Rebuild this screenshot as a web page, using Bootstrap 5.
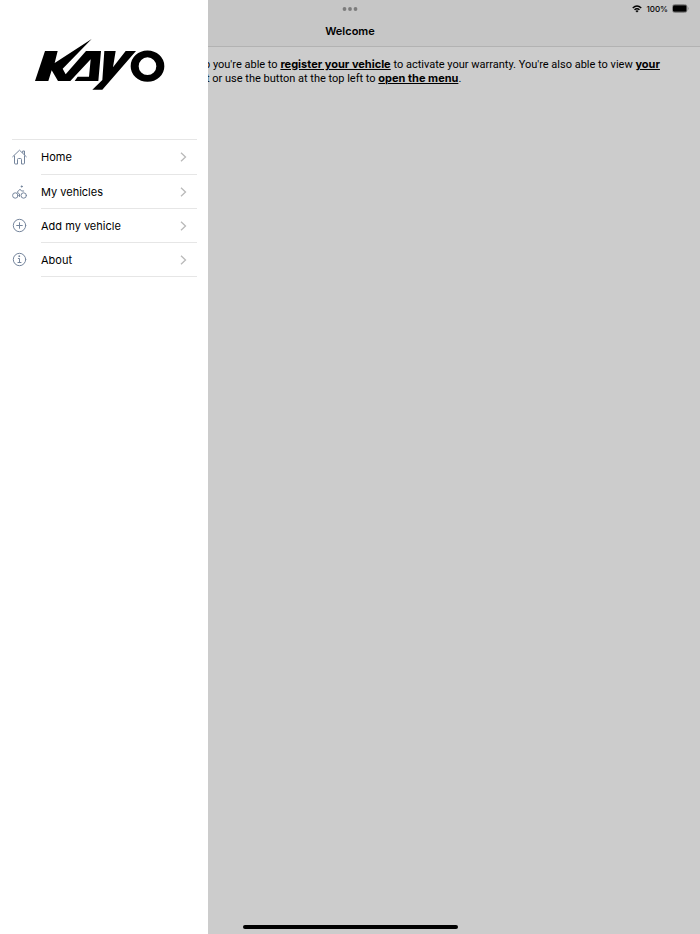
<!DOCTYPE html>
<html lang="en">
<head>
<meta charset="utf-8">
<meta name="viewport" content="width=device-width, initial-scale=1">
<title>Welcome</title>
<link href="https://cdn.jsdelivr.net/npm/bootstrap@5.3.0/dist/css/bootstrap.min.css" rel="stylesheet">
<style>
body { font-family: Inter, "Liberation Sans", sans-serif; font-size: 11px; line-height: 14px; color: #000; background: #cccccc; }
svg { display: block; }
.topbar { background: #c6c6c6; border-bottom: 1px solid #b2b2b2; }
.status { height: 17px; font-size: 8px; font-weight: 500; padding-right: 11px; }
.dots { color: #7c7c7c; top: 7px; }
.page-title { height: 29px; font-size: 11px; line-height: 29px; font-weight: 600; }
/* the paragraph begins beneath the open drawer */
.intro { padding: 11px 12px 0 206px; text-indent: -2px; font-family: Roboto, sans-serif; }
.intro a { color: #000; font-family: Inter, sans-serif; font-weight: 700; line-height: 1; }
.drawer { width: 208px; z-index: 10; }
.brand { padding: 38px 0 48px 34px; }
.menu { margin: 0 11px 0 12px; border-top: 1px solid #e6e6e6; }
.menu a { color: #000; }
.menu a:first-child .menu-row { height: 35px; }
.menu-icon { width: 29px; padding-bottom: 1px; color: #75859c; }
.menu-row { height: 34px; border-bottom: 1px solid #e6e6e6; padding-right: 10px; }
.chevron { color: #b9b9b9; }
.home-bar { width: 215px; height: 4px; background: #000; margin-bottom: 5px; }
</style>
<script src="https://cdn.jsdelivr.net/npm/bootstrap@5.3.0/dist/js/bootstrap.bundle.min.js"></script>
</head>
<body>
<div class="d-flex flex-column min-vh-100 position-relative">
  <header class="topbar position-relative">
    <div class="status d-flex align-items-center justify-content-end">
      <svg class="me-1" width="10" height="8" viewBox="0 0 20 16" fill="none" stroke="#000" stroke-width="2.8" aria-hidden="true"><path d="M1.500 6Q10-2 18.500 6M5 9.600Q10 5 15 9.600"/><path d="M10 15 6.900 12Q10 9.300 13.100 12Z" fill="#000" stroke="none"/></svg>
      <span>100%</span>
      <svg class="ms-1" width="17" height="9" viewBox="0 0 17 9" aria-hidden="true"><rect x=".5" y=".5" width="14.500" height="8" rx="2.300" fill="none" stroke="#858585"/><rect x="1" y="1.200" width="13.500" height="6.600" rx="1.300"/><path d="M16 3Q17.300 4.500 16 6Z" fill="#858585"/></svg>
    </div>
    <svg class="dots position-absolute start-50 translate-middle-x" width="16" height="4" viewBox="0 0 16 4" fill="currentColor" aria-hidden="true"><circle cx="2.500" cy="2" r="1.900"/><circle cx="8" cy="2" r="1.900"/><circle cx="13.500" cy="2" r="1.900"/></svg>
    <h1 class="page-title text-center m-0">Welcome</h1>
  </header>

  <main class="flex-grow-1">
    <p class="intro m-0">p you're able to <a href="#register">register your vehicle</a> to activate your warranty. You're also able to view <a href="#vehicles">your</a><br>t or use the button at the top left to <a href="#menu">open the menu</a>.</p>
  </main>

  <div class="home-bar rounded-pill mx-auto"></div>

  <aside class="drawer position-absolute top-0 bottom-0 start-0 bg-white" id="menu">
    <div class="brand">
      <svg width="132" height="53" viewBox="27 24 396 159" role="img" aria-label="Kayo"><path d="M60 63H98L89 99 200 27 113 116 122 133 183 63H228L220 153H149L158 140H192L197 88 136 153H99L80 121 70 153H30ZM238 63H272L264 112 302 63H333L232 179H202L232 150Z"/><path fill-rule="evenodd" d="M317 108.500A50.500 47 0 0 1 418 108.500 50.500 47 0 0 1 317 108.500ZM341 108.500A26.500 26.500 0 0 0 394 108.500 26.500 26.500 0 0 0 341 108.500Z"/></svg>
    </div>
    <nav class="menu" aria-label="Main menu">
      <a class="d-flex text-decoration-none" href="#home">
        <span class="menu-icon d-flex align-items-center"><svg width="15" height="16" viewBox="0 0 15 16" fill="none" stroke="currentColor" stroke-linecap="round" stroke-linejoin="round" aria-hidden="true"><path d="M.7 7.700 7.500 1.200 14.300 7.700M2.500 7V14Q2.500 15 3.500 15H5.500V10.500Q5.500 9.500 6.500 9.500H8.500Q9.500 9.500 9.500 10.500V15H11.500Q12.500 15 12.500 14V7M10.700 3.500V2H12.500V5.800"/></svg></span>
        <span class="menu-row d-flex flex-grow-1 align-items-center justify-content-between">Home<svg class="chevron" width="7" height="10" viewBox="0 0 7 10" fill="none" stroke="currentColor" stroke-width="1.300" aria-hidden="true"><path d="M1 .8 5.500 5 1 9.200"/></svg></span>
      </a>
      <a class="d-flex text-decoration-none" href="#vehicles">
        <span class="menu-icon d-flex align-items-center"><svg width="15" height="14" viewBox="0 0 15 14" fill="none" stroke="currentColor" stroke-linecap="round" stroke-linejoin="round" aria-hidden="true"><circle cx="3.300" cy="10.500" r="2.700"/><circle cx="11.700" cy="10.500" r="2.700"/><circle cx="9.700" cy="1.500" r=".8" fill="currentColor" stroke-width=".5"/><path d="M7.500 11.500V9L5.200 7.200 8 4.200 9.500 6H11.700"/></svg></span>
        <span class="menu-row d-flex flex-grow-1 align-items-center justify-content-between">My vehicles<svg class="chevron" width="7" height="10" viewBox="0 0 7 10" fill="none" stroke="currentColor" stroke-width="1.300" aria-hidden="true"><path d="M1 .8 5.500 5 1 9.200"/></svg></span>
      </a>
      <a class="d-flex text-decoration-none" href="#register">
        <span class="menu-icon d-flex align-items-center"><svg width="15" height="15" viewBox="0 0 15 15" fill="none" stroke="currentColor" stroke-linecap="round" aria-hidden="true"><circle cx="7.500" cy="7.500" r="6.200"/><path d="M7.500 4.700V10.300M4.700 7.500H10.300"/></svg></span>
        <span class="menu-row d-flex flex-grow-1 align-items-center justify-content-between">Add my vehicle<svg class="chevron" width="7" height="10" viewBox="0 0 7 10" fill="none" stroke="currentColor" stroke-width="1.300" aria-hidden="true"><path d="M1 .8 5.500 5 1 9.200"/></svg></span>
      </a>
      <a class="d-flex text-decoration-none" href="#about">
        <span class="menu-icon d-flex align-items-center"><svg width="15" height="15" viewBox="0 0 15 15" fill="none" stroke="currentColor" stroke-linecap="round" aria-hidden="true"><circle cx="7.500" cy="7.500" r="6.200"/><path d="M6.300 6.500H7.500V10.500M6 10.500H9"/><circle cx="7.300" cy="4.200" r=".9" fill="currentColor" stroke="none"/></svg></span>
        <span class="menu-row d-flex flex-grow-1 align-items-center justify-content-between">About<svg class="chevron" width="7" height="10" viewBox="0 0 7 10" fill="none" stroke="currentColor" stroke-width="1.300" aria-hidden="true"><path d="M1 .8 5.500 5 1 9.200"/></svg></span>
      </a>
    </nav>
  </aside>
</div>
</body>
</html>
